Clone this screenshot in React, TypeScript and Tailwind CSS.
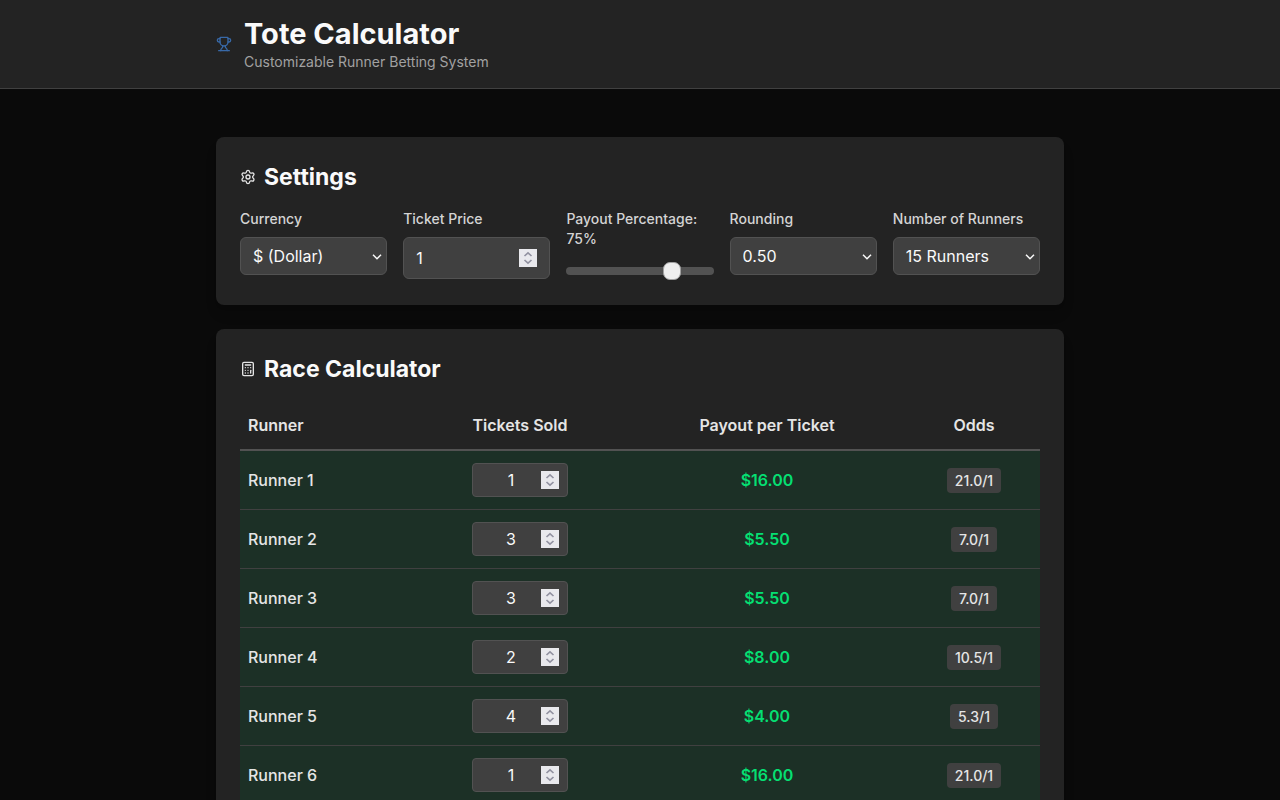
import { useState } from "react";
import type { ReactNode } from "react";
import { Calculator, Settings, Trophy } from "lucide-react";

const INITIAL_TICKETS = [1, 3, 3, 2, 4, 1, 1, 1, 1, 1, 1, 1, 1, 0, 0];

const CURRENCIES = [
  { symbol: "$", name: "Dollar" },
  { symbol: "€", name: "Euro" },
  { symbol: "£", name: "Pound" },
];

const NUMBER_INPUT =
  "min-w-0 flex-1 bg-transparent text-neutral-50 outline-none [appearance:textfield] [&::-webkit-inner-spin-button]:appearance-none [&::-webkit-outer-spin-button]:appearance-none";

function StepIcon({ up }: { up: boolean }) {
  return (
    <svg viewBox="0 0 18 9" className="h-[9px] w-[18px]" fill="none" stroke="#9191a0" strokeWidth="1.6">
      <path d={up ? "M5.5 7 L9 3.8 L12.5 7" : "M5.5 2 L9 5.2 L12.5 2"} />
    </svg>
  );
}

function Stepper({ label, value, onChange }: { label: string; value: number; onChange: (n: number) => void }) {
  return (
    <span className="flex size-[18px] shrink-0 flex-col bg-[#e9e9ed]">
      <button type="button" aria-label={`Increase ${label}`} onClick={() => onChange(value + 1)}>
        <StepIcon up />
      </button>
      <button type="button" aria-label={`Decrease ${label}`} onClick={() => onChange(Math.max(0, value - 1))}>
        <StepIcon up={false} />
      </button>
    </span>
  );
}

function Field({ id, label, children }: { id: string; label: string; children: ReactNode }) {
  return (
    <div>
      <label htmlFor={id} className="mb-2 block text-sm font-medium text-neutral-300">
        {label}
      </label>
      {children}
    </div>
  );
}

function Select({ id, value, onChange, children }: { id: string; value: string; onChange: (v: string) => void; children: ReactNode }) {
  return (
    <div className="relative">
      <select
        id={id}
        value={value}
        onChange={(e) => onChange(e.target.value)}
        className="block h-[38px] w-full appearance-none rounded-md border border-neutral-600 bg-neutral-700 px-3 text-neutral-50"
      >
        {children}
      </select>
      <svg viewBox="0 0 10 6" className="pointer-events-none absolute top-[17px] right-[5px] h-1.5 w-2.5" fill="none" stroke="#fafafa" strokeWidth="1.5">
        <path d="M1 0.8 L5 4.8 L9 0.8" />
      </svg>
    </div>
  );
}

function Card({ icon, title, children }: { icon: ReactNode; title: string; children: ReactNode }) {
  return (
    <section className="rounded-lg bg-[#232323] p-6 shadow-lg">
      <h2 className="mb-4 flex items-center gap-2 text-[23px] leading-8 font-bold text-neutral-50">
        <span className="text-neutral-200">{icon}</span>
        {title}
      </h2>
      {children}
    </section>
  );
}

export default function App() {
  const [currency, setCurrency] = useState("$");
  const [price, setPrice] = useState(1);
  const [percent, setPercent] = useState(75);
  const [rounding, setRounding] = useState("0.50");
  const [runners, setRunners] = useState("15");
  const [tickets, setTickets] = useState(INITIAL_TICKETS);

  const active = tickets.slice(0, Number(runners));
  const total = active.reduce((sum, n) => sum + n, 0);
  const step = Number(rounding);

  const payout = (n: number) => {
    const raw = ((total * price * percent) / 100) / n;
    return n > 0 ? Math.round(raw / step) * step : 0;
  };
  const odds = (n: number) => (n > 0 ? (total / n).toFixed(1) : "0.0");

  const setTicket = (index: number, n: number) => setTickets(tickets.map((t, i) => (i === index ? n : t)));

  return (
    <div className="min-h-screen bg-[#0a0a0a] font-['Inter',sans-serif] text-base text-neutral-200 antialiased">
      <header className="border-b border-neutral-700 bg-[#232323] py-4">
        <div className="mx-auto flex max-w-4xl items-center gap-3 px-6">
          <Trophy className="size-4 shrink-0 text-[#3869a8]" />
          <div>
            <h1 className="text-[29px] leading-9 font-bold text-neutral-50">Tote Calculator</h1>
            <p className="text-sm text-neutral-400">Customizable Runner Betting System</p>
          </div>
        </div>
      </header>

      <main className="mx-auto flex max-w-4xl flex-col gap-6 px-6 py-12">
        <Card icon={<Settings className="size-4" />} title="Settings">
          <div className="grid grid-cols-2 gap-4 md:grid-cols-5">
            <Field id="currency" label="Currency">
              <Select id="currency" value={currency} onChange={setCurrency}>
                {CURRENCIES.map((c) => (
                  <option key={c.symbol} value={c.symbol}>{`${c.symbol} (${c.name})`}</option>
                ))}
              </Select>
            </Field>

            <Field id="price" label="Ticket Price">
              <div className="flex items-center rounded-md border border-neutral-600 bg-neutral-700 px-3 py-2">
                <input id="price" type="number" min={0} value={price} onChange={(e) => setPrice(Number(e.target.value))} className={NUMBER_INPUT} />
                <Stepper label="ticket price" value={price} onChange={setPrice} />
              </div>
            </Field>

            <Field id="percent" label={`Payout Percentage: ${percent}%`}>
              <div className="flex h-6 items-center pt-1">
                <input
                  id="percent"
                  type="range"
                  min={0}
                  max={100}
                  value={percent}
                  onChange={(e) => setPercent(Number(e.target.value))}
                  className="h-2 w-full appearance-none rounded-full bg-neutral-600 [&::-webkit-slider-thumb]:size-[18px] [&::-webkit-slider-thumb]:appearance-none [&::-webkit-slider-thumb]:rounded-[7px] [&::-webkit-slider-thumb]:border [&::-webkit-slider-thumb]:border-neutral-400 [&::-webkit-slider-thumb]:bg-[#efefef]"
                />
              </div>
            </Field>

            <Field id="rounding" label="Rounding">
              <Select id="rounding" value={rounding} onChange={setRounding}>
                {["0.05", "0.10", "0.50", "1.00"].map((r) => (
                  <option key={r}>{r}</option>
                ))}
              </Select>
            </Field>

            <Field id="runners" label="Number of Runners">
              <Select id="runners" value={runners} onChange={setRunners}>
                {INITIAL_TICKETS.map((_, i) => (
                  <option key={i} value={String(i + 1)}>{`${i + 1} Runners`}</option>
                ))}
              </Select>
            </Field>
          </div>
        </Card>

        <Card icon={<Calculator className="size-4" />} title="Race Calculator">
          <table className="w-full table-fixed border-separate border-spacing-0">
            <thead>
              <tr className="[&>th]:border-b-2 [&>th]:border-neutral-600 [&>th]:px-2 [&>th]:py-3 [&>th]:font-semibold">
                <th className="w-[21.75%] text-left">Runner</th>
                <th className="w-[26.5%]">Tickets Sold</th>
                <th className="w-[35.25%]">Payout per Ticket</th>
                <th>Odds</th>
              </tr>
            </thead>
            <tbody>
              {active.map((n, i) => (
                <tr key={i} className="bg-[#1c3026] text-center [&>td]:border-b [&>td]:border-neutral-700 [&>td]:px-2 [&>td]:py-3">
                  <td className="text-left font-medium">
                    <label htmlFor={`runner-${i}`}>{`Runner ${i + 1}`}</label>
                  </td>
                  <td>
                    <div className="mx-auto flex w-24 items-center rounded-sm border border-neutral-600 bg-neutral-700 px-2 py-1">
                      <input
                        id={`runner-${i}`}
                        type="number"
                        min={0}
                        value={n}
                        onChange={(e) => setTicket(i, Number(e.target.value))}
                        className={`${NUMBER_INPUT} text-center`}
                      />
                      <Stepper label={`tickets for runner ${i + 1}`} value={n} onChange={(v) => setTicket(i, v)} />
                    </div>
                  </td>
                  <td className="font-semibold text-green-400">{`${currency}${payout(n).toFixed(2)}`}</td>
                  <td>
                    <span className="rounded-sm bg-neutral-700 px-2 py-1 text-sm font-medium">{`${odds(n)}/1`}</span>
                  </td>
                </tr>
              ))}
            </tbody>
          </table>
        </Card>
      </main>
    </div>
  );
}
